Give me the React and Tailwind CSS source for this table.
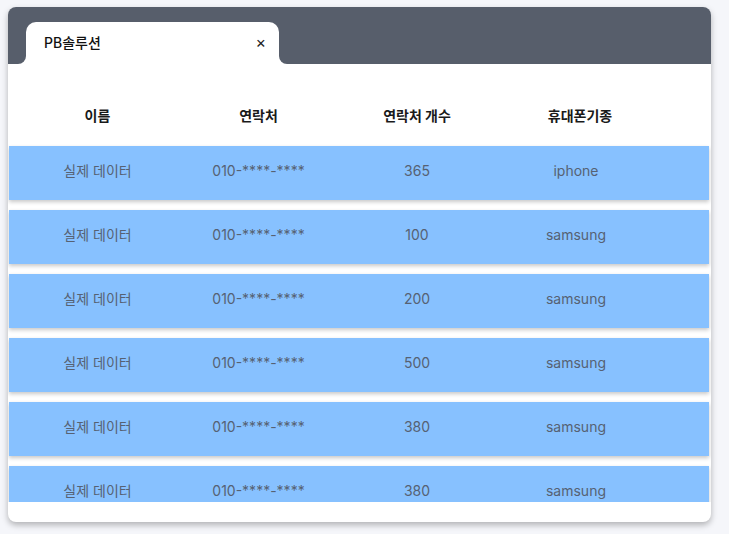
const rows = [
  { name: '실제 데이터', phone: '010-****-****', count: '365', model: 'iphone' },
  { name: '실제 데이터', phone: '010-****-****', count: '100', model: 'samsung' },
  { name: '실제 데이터', phone: '010-****-****', count: '200', model: 'samsung' },
  { name: '실제 데이터', phone: '010-****-****', count: '500', model: 'samsung' },
  { name: '실제 데이터', phone: '010-****-****', count: '380', model: 'samsung' },
  { name: '실제 데이터', phone: '010-****-****', count: '380', model: 'samsung' },
];

const font = { fontFamily: 'Inter, "Noto Sans CJK KR", sans-serif' };

export default function App() {
  return (
    <div className="min-h-screen bg-[#f5f6fa] pt-[7px] pl-[8px]" style={font}>
      <div className="w-[703px] h-[515px] rounded-lg bg-white shadow-[0_3px_6px_rgba(0,0,0,0.28)] overflow-hidden flex flex-col">
        {/* Tab bar */}
        <div className="h-[57px] shrink-0 bg-[#575e6b] flex items-end pl-[18px]">
          <div className="relative w-[253px] h-[42px] bg-white rounded-t-[10px] flex items-center justify-between pl-[18px] pr-[13px] pb-[2px]">
            <span className="text-[14px] font-medium text-[#111]">PB솔루션</span>
            <span className="text-[16px] leading-none text-[#222]">×</span>
            {/* flared corners */}
            <span className="absolute bottom-0 -left-[8px] w-[8px] h-[8px] bg-white">
              <span className="block w-full h-full bg-[#575e6b] rounded-br-[8px]" />
            </span>
            <span className="absolute bottom-0 -right-[8px] w-[8px] h-[8px] bg-white">
              <span className="block w-full h-full bg-[#575e6b] rounded-bl-[8px]" />
            </span>
          </div>
        </div>

        {/* Table */}
        <div className="flex-1 pb-[20px] min-h-0">
          <div className="h-full overflow-hidden">
            <div className="grid grid-cols-[161px_161px_156px_170px] pl-[9px] pt-[42px] pb-[20px] text-[14px] font-bold text-[#1a1a1a] leading-[20px]">
              <div className="text-center">이름</div>
              <div className="text-center">연락처</div>
              <div className="text-center">연락처 개수</div>
              <div className="text-center">휴대폰기종</div>
            </div>
            <div className="flex flex-col gap-[10px] ml-[1px] mr-[2px]">
              {rows.map((r, i) => (
                <div
                  key={i}
                  className="h-[54px] shrink-0 bg-[#87c1ff] shadow-[0_2px_4px_rgba(0,0,0,0.22)] grid grid-cols-[161px_161px_156px_162px] items-center pl-[8px] pb-[6px] text-[14px] text-[#566173]"
                >
                  <div className="text-center">{r.name}</div>
                  <div className="text-center">{r.phone}</div>
                  <div className="text-center">{r.count}</div>
                  <div className="text-center">{r.model}</div>
                </div>
              ))}
            </div>
          </div>
        </div>
      </div>
    </div>
  );
}
